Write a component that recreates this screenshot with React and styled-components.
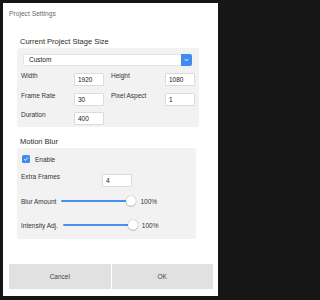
import React from "react";
import styled, { createGlobalStyle } from "styled-components";

const GlobalStyle = createGlobalStyle`
  html, body {
    margin: 0;
    padding: 0;
    background: #161616;
  }
  body {
    font-family: "Liberation Sans", Arial, sans-serif;
  }
  #root {
    padding: 3px 5px 4px 3px;
  }
`;

const Dialog = styled.div`
  width: 215px;
  height: 293px;
  background: #ffffff;
  display: flex;
  flex-direction: column;
  box-sizing: border-box;
`;

const Title = styled.div`
  padding: 7px 0 0 6px;
  font-size: 6.7px;
  line-height: 8px;
  color: #6b6b6b;
`;

const Content = styled.div`
  padding-left: 14px;
`;

const Heading = styled.div`
  margin: ${(p) => p.$top}px 0 2px 3px;
  font-size: 7.5px;
  line-height: 8px;
  color: #2b2b2b;
`;

const Panel = styled.div`
  width: ${(p) => p.$width}px;
  box-sizing: border-box;
  background: #f2f2f2;
  border-radius: 3px;
  padding: ${(p) => p.$pad};
`;

const Select = styled.div`
  margin: 0 7px 0 6px;
  height: 12px;
  display: flex;
  box-sizing: border-box;
  background: #ffffff;
  border: 1px solid #e4e4e4;
  border-radius: 2px;
`;

const SelectValue = styled.div`
  flex: 1;
  padding-left: 5px;
  font-size: 6.5px;
  line-height: 10px;
  color: #222;
`;

const SelectArrow = styled.div`
  width: 11px;
  margin: -1px -1px -1px 0;
  background: #3f8bf2;
  border-radius: 0 2px 2px 0;
  display: flex;
  align-items: center;
  justify-content: center;
`;

const FieldGrid = styled.div`
  display: grid;
  grid-template-columns: 83px 84px;
  column-gap: 7px;
  row-gap: 6.5px;
  margin: 7px 0 0 4px;
`;

const Pair = styled.div`
  display: flex;
  align-items: flex-start;
`;

const FieldLabel = styled.div`
  width: ${(p) => p.$w}px;
  flex-shrink: 0;
  font-size: 6.5px;
  line-height: 6px;
  color: #333;
  white-space: nowrap;
`;

const TextBox = styled.input`
  width: 30px;
  height: 13px;
  box-sizing: border-box;
  margin: 0;
  padding: 0 3px;
  border: 1px solid #dcdcdc;
  border-radius: 1px;
  background: #ffffff;
  font-family: "Liberation Sans", Arial, sans-serif;
  font-size: 6.5px;
  line-height: 11px;
  color: #222;
  outline: none;
`;

const CheckRow = styled.label`
  display: flex;
  align-items: center;
  gap: 5px;
  height: 8px;
  margin-left: 1px;
  font-size: 6.5px;
  color: #333;
`;

const CheckBox = styled.span`
  width: 8px;
  height: 8px;
  border-radius: 1.5px;
  background: #3f8bf2;
  display: flex;
  align-items: center;
  justify-content: center;
`;

const FieldRow = styled.div`
  display: flex;
  align-items: flex-start;
  margin-top: ${(p) => p.$top}px;
`;

const SliderRow = styled.div`
  display: flex;
  align-items: center;
  height: 10px;
  margin-top: ${(p) => p.$top}px;
`;

const SliderLabel = styled.span`
  margin-right: 5px;
  font-size: 6.5px;
  color: #333;
  white-space: nowrap;
`;

const Range = styled.input`
  -webkit-appearance: none;
  appearance: none;
  width: 75px;
  height: 10px;
  margin: 0;
  background: transparent;

  &::-webkit-slider-runnable-track {
    height: 2px;
    border-radius: 1px;
    background: #4a8ef0;
  }

  &::-webkit-slider-thumb {
    -webkit-appearance: none;
    width: 10px;
    height: 10px;
    margin-top: -4px;
    border-radius: 50%;
    background: #ffffff;
    box-shadow: 0 0 1px rgba(0, 0, 0, 0.45), 0 1px 1px rgba(0, 0, 0, 0.15);
  }
`;

const Percent = styled.span`
  margin-left: 4px;
  font-size: 6.5px;
  color: #333;
`;

const Footer = styled.div`
  margin-top: auto;
  display: flex;
  gap: 1px;
  padding: 0 5px 7px 6px;
`;

const Button = styled.button`
  flex: 1;
  height: 25px;
  margin: 0;
  border: none;
  background: #e1e1e1;
  font-family: "Liberation Sans", Arial, sans-serif;
  font-size: 6.5px;
  color: #444;
`;

const pairs = [
  [
    { label: "Width", value: "1920", w: 53 },
    { label: "Height", value: "1080", w: 54 },
  ],
  [
    { label: "Frame Rate", value: "30", w: 53 },
    { label: "Pixel Aspect", value: "1", w: 54 },
  ],
  [{ label: "Duration", value: "400", w: 53 }],
];

const App = () => {
  return (
    <>
      <GlobalStyle />
      <Dialog>
        <Title>Project Settings</Title>
        <Content>
          <Heading $top={20}>Current Project Stage Size</Heading>
          <Panel $width={182} $pad="6px 0 2px 0">
            <Select>
              <SelectValue>Custom</SelectValue>
              <SelectArrow>
                <svg width="5" height="4" viewBox="0 0 5 4">
                  <polyline
                    points="0.6,0.9 2.5,2.9 4.4,0.9"
                    fill="none"
                    stroke="#fff"
                    strokeWidth="0.9"
                  />
                </svg>
              </SelectArrow>
            </Select>
            <FieldGrid>
              {pairs.flat().map((f) => (
                <Pair key={f.label}>
                  <FieldLabel $w={f.w}>{f.label}</FieldLabel>
                  <TextBox readOnly defaultValue={f.value} />
                </Pair>
              ))}
            </FieldGrid>
          </Panel>

          <Heading $top={11}>Motion Blur</Heading>
          <Panel $width={179} $pad="7px 0 9px 4px">
            <CheckRow>
              <CheckBox>
                <svg width="6" height="6" viewBox="0 0 6 6">
                  <polyline
                    points="1.1,3.1 2.4,4.4 4.9,1.4"
                    fill="none"
                    stroke="#fff"
                    strokeWidth="0.9"
                  />
                </svg>
              </CheckBox>
              Enable
            </CheckRow>
            <FieldRow $top={11}>
              <FieldLabel $w={81}>Extra Frames</FieldLabel>
              <TextBox readOnly defaultValue="4" />
            </FieldRow>
            <SliderRow $top={9}>
              <SliderLabel>Blur Amount</SliderLabel>
              <Range type="range" min="0" max="100" defaultValue="100" />
              <Percent>100%</Percent>
            </SliderRow>
            <SliderRow $top={14}>
              <SliderLabel>Intensity Adj.</SliderLabel>
              <Range type="range" min="0" max="100" defaultValue="100" />
              <Percent>100%</Percent>
            </SliderRow>
          </Panel>
        </Content>
        <Footer>
          <Button>Cancel</Button>
          <Button>OK</Button>
        </Footer>
      </Dialog>
    </>
  );
};

export default App;
